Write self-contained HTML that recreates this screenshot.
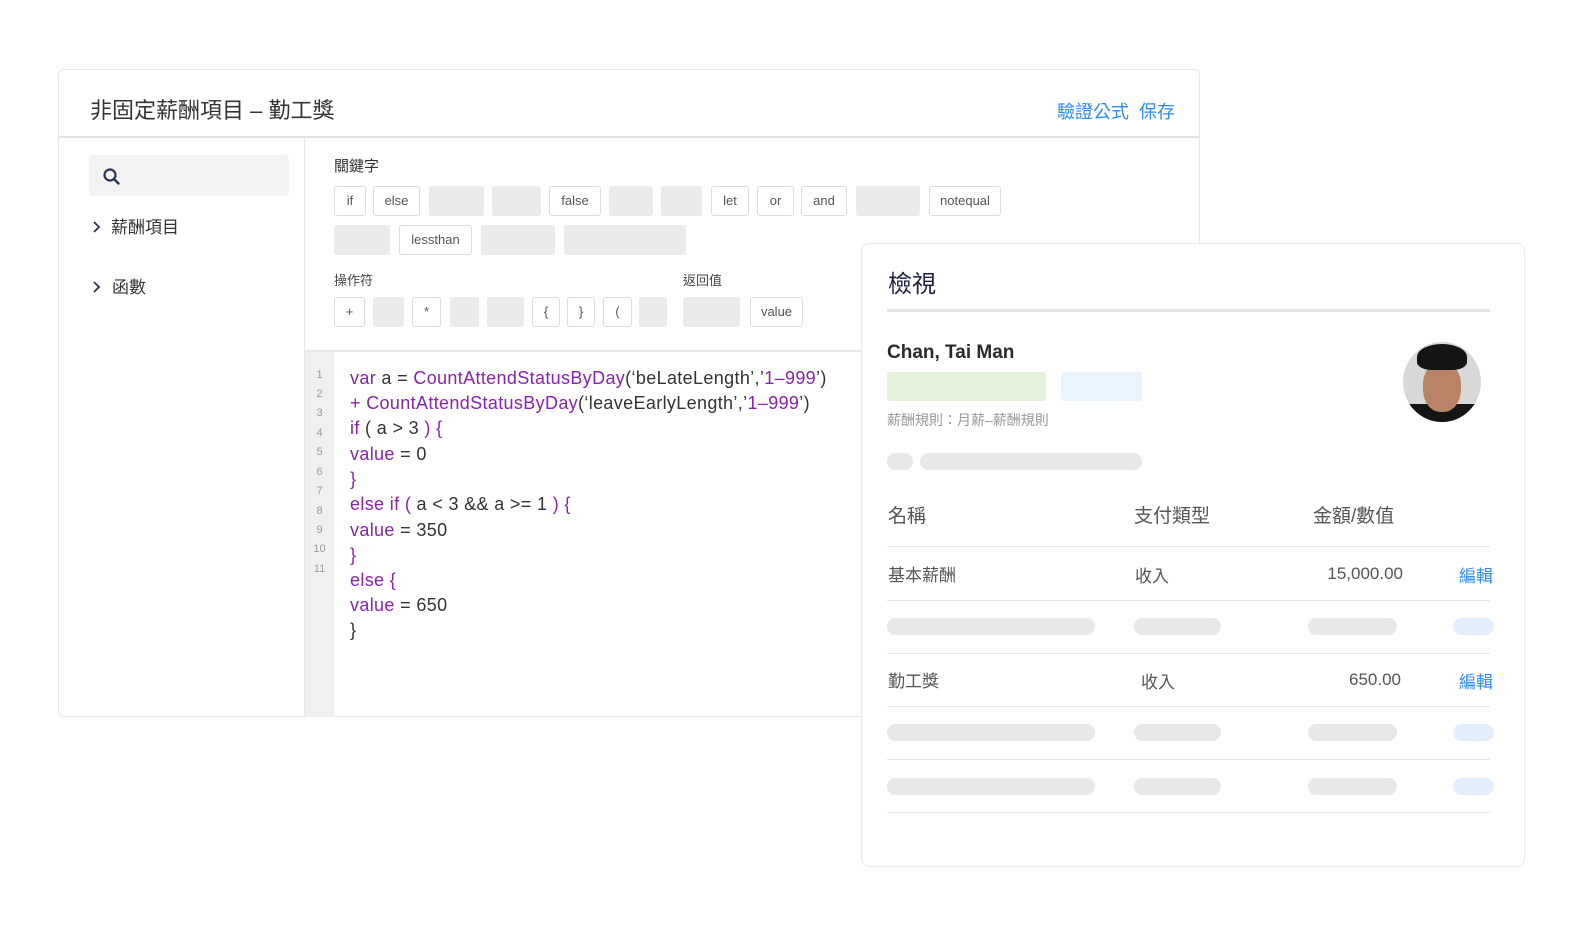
<!DOCTYPE html>
<html><head><meta charset="utf-8"><style>
*{margin:0;padding:0;box-sizing:border-box}
body{width:1570px;height:938px;background:#fff;position:relative;overflow:hidden;font-family:"Liberation Sans","Noto Sans CJK TC",sans-serif;color:#333}
.a{position:absolute}
.b{position:absolute;height:30px;border:1px solid #ddd;border-radius:3px;background:#fff;font-size:13px;color:#555;text-align:center;line-height:28px}
.g{position:absolute;height:30px;border-radius:3px;background:#ebebeb}
.t{position:absolute;white-space:nowrap}
.ln{position:absolute;left:305px;width:29px;text-align:center;font-size:11px;color:#999}
.cd{position:absolute;left:350px;font-size:18px;letter-spacing:0.35px;color:#333;white-space:nowrap}
.p{color:#8a22b0}
.hl{position:absolute;left:887px;width:603px;height:1px;background:#e6e6e6}
.sk{position:absolute;height:17px;border-radius:9px;background:#e8e8e8}
</style></head><body>
<div class="a" style="left:58px;top:69px;width:1142px;height:648px;border:1px solid #e8e8e8;border-radius:6px"></div>
<div class="t" style="left:90px;top:93px;font-size:22px;color:#333">非固定薪酬項目 – 勤工獎</div>
<div class="t" style="left:1057px;top:98px;font-size:18px;color:#2d8cf0">驗證公式&nbsp; 保存</div>
<div class="a" style="left:59px;top:136px;width:1140px;height:2px;background:#e3e3e3"></div>
<div class="a" style="left:304px;top:138px;width:1px;height:579px;background:#e3e8ef"></div>
<div class="a" style="left:89px;top:155px;width:200px;height:41px;background:#f3f3f3;border-radius:4px"></div>
<svg class="a" style="left:102px;top:167px" width="20" height="20" viewBox="0 0 20 20"><circle cx="8" cy="8" r="5.5" fill="none" stroke="#2c3550" stroke-width="2.2"/><path d="M12 12l4.5 4.5" stroke="#2c3550" stroke-width="2.4" stroke-linecap="round"/></svg>
<svg class="a" style="left:91px;top:220px" width="10" height="14"><path d="M3 2l5 5-5 5" fill="none" stroke="#2c3550" stroke-width="1.8"/></svg>
<div class="t" style="left:111px;top:213px;font-size:17px;color:#333">薪酬項目</div>
<svg class="a" style="left:91px;top:280px" width="10" height="14"><path d="M3 2l5 5-5 5" fill="none" stroke="#2c3550" stroke-width="1.8"/></svg>
<div class="t" style="left:112px;top:273px;font-size:17px;color:#333">函數</div>

<div class="t" style="left:334px;top:155px;font-size:15px;color:#333">關鍵字</div>
<div class="b" style="left:334px;top:186px;width:32px">if</div>
<div class="b" style="left:373px;top:186px;width:47px">else</div>
<div class="g" style="left:429px;top:186px;width:55px"></div>
<div class="g" style="left:492px;top:186px;width:49px"></div>
<div class="b" style="left:549px;top:186px;width:52px">false</div>
<div class="g" style="left:609px;top:186px;width:44px"></div>
<div class="g" style="left:661px;top:186px;width:41px"></div>
<div class="b" style="left:711px;top:186px;width:38px">let</div>
<div class="b" style="left:757px;top:186px;width:37px">or</div>
<div class="b" style="left:801px;top:186px;width:46px">and</div>
<div class="g" style="left:856px;top:186px;width:64px"></div>
<div class="b" style="left:929px;top:186px;width:72px">notequal</div>
<div class="g" style="left:334px;top:225px;width:56px"></div>
<div class="b" style="left:399px;top:225px;width:73px">lessthan</div>
<div class="g" style="left:481px;top:225px;width:74px"></div>
<div class="g" style="left:564px;top:225px;width:122px"></div>
<div class="t" style="left:334px;top:270px;font-size:13px;color:#444">操作符</div>
<div class="t" style="left:683px;top:270px;font-size:13px;color:#444">返回值</div>
<div class="b" style="left:334px;top:297px;width:31px">+</div>
<div class="g" style="left:373px;top:297px;width:31px"></div>
<div class="b" style="left:412px;top:297px;width:29px">*</div>
<div class="g" style="left:450px;top:297px;width:29px"></div>
<div class="g" style="left:487px;top:297px;width:37px"></div>
<div class="b" style="left:532px;top:297px;width:28px">{</div>
<div class="b" style="left:567px;top:297px;width:28px">}</div>
<div class="b" style="left:603px;top:297px;width:29px">(</div>
<div class="g" style="left:639px;top:297px;width:28px"></div>
<div class="g" style="left:683px;top:297px;width:57px"></div>
<div class="b" style="left:750px;top:297px;width:53px">value</div>
<div class="a" style="left:305px;top:350px;width:556px;height:2px;background:#e6e9ee"></div>
<div class="a" style="left:305px;top:352px;width:29px;height:365px;background:#f0f0f0"></div>
<div class="ln" style="top:369px">1</div><div class="ln" style="top:388px">2</div><div class="ln" style="top:407px">3</div><div class="ln" style="top:427px">4</div><div class="ln" style="top:446px">5</div><div class="ln" style="top:466px">6</div><div class="ln" style="top:485px">7</div><div class="ln" style="top:505px">8</div><div class="ln" style="top:524px">9</div><div class="ln" style="top:543px">10</div><div class="ln" style="top:563px">11</div>
<div class="cd" style="top:368px"><span class="p">var</span> a = <span class="p">CountAttendStatusByDay</span>(‘beLateLength’,’<span class="p">1–999</span>’)</div>
<div class="cd" style="top:393px"><span class="p">+ CountAttendStatusByDay</span>(‘leaveEarlyLength’,’<span class="p">1–999</span>’)</div>
<div class="cd" style="top:418px"><span class="p">if</span> ( a &gt; 3 <span class="p">) {</span></div>
<div class="cd" style="top:444px"><span class="p">value</span> = 0</div>
<div class="cd" style="top:469px"><span class="p">}</span></div>
<div class="cd" style="top:494px"><span class="p">else if (</span> a &lt; 3 &amp;&amp; a &gt;= 1 <span class="p">) {</span></div>
<div class="cd" style="top:520px"><span class="p">value</span> = 350</div>
<div class="cd" style="top:545px"><span class="p">}</span></div>
<div class="cd" style="top:570px"><span class="p">else {</span></div>
<div class="cd" style="top:595px"><span class="p">value</span> = 650</div>
<div class="cd" style="top:620px">}</div>

<div class="a" style="left:861px;top:243px;width:664px;height:624px;background:#fff;border:1px solid #e8ebef;border-radius:8px"></div>
<div class="t" style="left:888px;top:264px;font-size:24px;color:#1f2340">檢視</div>
<div class="a" style="left:887px;top:309px;width:603px;height:3px;background:#e3e3e3"></div>
<div class="t" style="left:887px;top:342px;font-size:19px;font-weight:bold;color:#2a2a2a">Chan, Tai Man</div>
<div class="a" style="left:887px;top:372px;width:159px;height:29px;background:#e6f2dc;border-radius:3px"></div>
<div class="a" style="left:1061px;top:372px;width:81px;height:29px;background:#eaf4ff;border-radius:3px"></div>
<div class="t" style="left:887px;top:410px;font-size:14px;color:#999">薪酬規則：月薪–薪酬規則</div>
<div class="sk" style="left:887px;top:453px;width:26px"></div>
<div class="sk" style="left:920px;top:453px;width:222px"></div>
<div class="a" style="left:1403px;top:342px;width:78px;height:80px;border-radius:50%;overflow:hidden;background:#d8d8d8">
<div class="a" style="left:0;top:62px;width:78px;height:20px;background:#151515"></div>
<div class="a" style="left:20px;top:20px;width:38px;height:50px;border-radius:45%;background:#b98466"></div>
<div class="a" style="left:14px;top:2px;width:50px;height:26px;border-radius:50% 50% 30% 30%;background:#141414"></div>
</div>
<div class="t" style="left:888px;top:501px;font-size:19px;color:#555">名稱</div>
<div class="t" style="left:1134px;top:501px;font-size:19px;color:#555">支付類型</div>
<div class="t" style="left:1313px;top:501px;font-size:19px;color:#555">金額/數值</div>
<div class="hl" style="top:546px"></div>
<div class="t" style="left:888px;top:561px;font-size:17px;color:#555">基本薪酬</div>
<div class="t" style="left:1135px;top:562px;font-size:17px;color:#555">收入</div>
<div class="t" style="left:1303px;top:564px;width:100px;text-align:right;font-size:17px;color:#555">15,000.00</div>
<div class="t" style="left:1459px;top:562px;font-size:17px;color:#2d8cf0">編輯</div>
<div class="hl" style="top:600px"></div>
<div class="sk" style="left:887px;top:618px;width:208px"></div><div class="sk" style="left:1134px;top:618px;width:87px"></div><div class="sk" style="left:1308px;top:618px;width:89px"></div><div class="sk" style="left:1453px;top:618px;width:41px;background:#e3effd"></div>
<div class="hl" style="top:653px"></div>
<div class="t" style="left:888px;top:667px;font-size:17px;color:#555">勤工獎</div>
<div class="t" style="left:1141px;top:668px;font-size:17px;color:#555">收入</div>
<div class="t" style="left:1303px;top:670px;width:98px;text-align:right;font-size:17px;color:#555">650.00</div>
<div class="t" style="left:1459px;top:668px;font-size:17px;color:#2d8cf0">編輯</div>
<div class="hl" style="top:706px"></div>
<div class="sk" style="left:887px;top:724px;width:208px"></div><div class="sk" style="left:1134px;top:724px;width:87px"></div><div class="sk" style="left:1308px;top:724px;width:89px"></div><div class="sk" style="left:1453px;top:724px;width:41px;background:#e3effd"></div>
<div class="hl" style="top:759px"></div>
<div class="sk" style="left:887px;top:778px;width:208px"></div><div class="sk" style="left:1134px;top:778px;width:87px"></div><div class="sk" style="left:1308px;top:778px;width:89px"></div><div class="sk" style="left:1453px;top:778px;width:41px;background:#e3effd"></div>
<div class="hl" style="top:812px"></div>
</body></html>
